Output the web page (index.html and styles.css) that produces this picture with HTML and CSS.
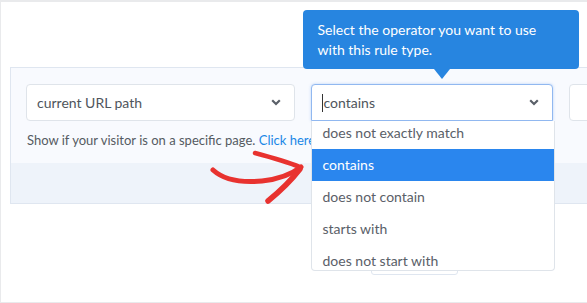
FILE: index.html
```html
<!DOCTYPE html>
<html>

<head>
  <title>Rule Operator</title>
  <link rel="stylesheet" href="styles.css">
</head>

<body>

  <div class="frame">
    <div class="rule-panel">
      <div class="rule-row">
        <div class="select">
          <span class="select-text">current URL path</span>
          <svg class="chevron" width="10" height="7" viewBox="0 0 10 7"><path d="M1.2 1.2 L5 5 L8.8 1.2" fill="none" stroke="#5a6068" stroke-width="2.2"/></svg>
        </div>

        <div class="select select-focus">
          <span class="caret"></span>
          <span class="select-text">contains</span>
          <svg class="chevron" width="10" height="7" viewBox="0 0 10 7"><path d="M1.2 1.2 L5 5 L8.8 1.2" fill="none" stroke="#5a6068" stroke-width="2.2"/></svg>

          <div class="tooltip">
            <p>Select the operator you want to use with this rule type.</p>
          </div>

          <div class="options">
            <ul class="option-list">
              <li>does not exactly match</li>
              <li class="active">contains</li>
              <li>does not contain</li>
              <li>starts with</li>
              <li>does not start with</li>
            </ul>
          </div>
        </div>

        <div class="select select-last"></div>
      </div>

      <p class="help-text">Show if your visitor is on a specific page. <a href="#">Click here</a></p>

      <div class="panel-footer"></div>
    </div>

    <div class="button-row">
      <button class="add-button"></button>
    </div>

    <!-- hand drawn arrow -->
    <svg class="red-arrow" width="110" height="60" viewBox="200 145 110 60">
      <path d="M213 170 C224 180 240 183 262 181 C280 179 292 174 301 167" fill="none" stroke="#e8322f" stroke-width="5" stroke-linecap="round"/>
      <path d="M255 153 C270 157 285 161 300 167" fill="none" stroke="#e8322f" stroke-width="4.5" stroke-linecap="round"/>
      <path d="M300 169 C290 182 279 192 268 201" fill="none" stroke="#e8322f" stroke-width="5.5" stroke-linecap="round"/>
    </svg>
  </div>

</body>

</html>
```

FILE: styles.css
```css
* {
  box-sizing: border-box;
  font-family: "Lato", "Open Sans", sans-serif;
}

body {
  margin: 0;
}

/* Outer frame */
.frame {
  position: relative;
  width: 587px;
  height: 303px;
  overflow: hidden;
  background-color: #ffffff;
  border-top: 2px solid #e9eaec;
  border-left: 1px solid #e9eaec;
  border-bottom: 1px solid #e9eaec;
}

/* Rule panel */
.rule-panel {
  width: 620px;
  margin-top: 65px;
  margin-left: 9px;
  background-color: #f8fafe;
  border: 1px solid #dfe6f0;
}

.rule-row {
  display: flex;
  gap: 16px;
  padding: 16px 0 0 15px;
}

.select {
  position: relative;
  display: flex;
  align-items: center;
  width: 270px;
  height: 37px;
  padding: 0 13px 0 10px;
  background-color: #ffffff;
  border: 1px solid #dfe4ea;
  border-radius: 4px;
}

.select-text {
  flex: 1;
  font-size: 14px;
  color: #4f555c;
}

.select-focus {
  width: 244px;
  padding-left: 10px;
  border-color: #91b8f0;
  border-radius: 4px 4px 0 0;
  box-shadow: 0 0 3px rgba(66, 140, 240, 0.35);
}

.select-last {
  width: 60px;
}

.caret {
  width: 1px;
  height: 18px;
  margin-right: 1px;
  background-color: #333333;
}

/* Help text */
.help-text {
  margin: 11px 0 0 16px;
  font-size: 13px;
  color: #555b62;
}

.help-text a {
  color: #1b87e6;
  text-decoration: none;
}

.panel-footer {
  height: 40px;
  margin-top: 15px;
  background-color: #eef3fa;
}

/* Tooltip */
.tooltip {
  position: absolute;
  left: -9px;
  top: -75px;
  width: 276px;
  height: 59px;
  padding: 10px 15px;
  background-color: #2785e0;
  border-radius: 4px;
}

.tooltip::after {
  content: "";
  position: absolute;
  left: 131px;
  bottom: -10px;
  border-left: 8px solid transparent;
  border-right: 8px solid transparent;
  border-top: 10px solid #2785e0;
}

.tooltip p {
  margin: 0;
  font-size: 14px;
  line-height: 20px;
  color: #ffffff;
}

/* Option list */
.options {
  position: absolute;
  left: -1px;
  top: 36px;
  width: 244px;
  height: 150px;
  overflow: hidden;
  background-color: #ffffff;
  border: 1px solid #dfe4ea;
  border-top: none;
  border-radius: 0 0 4px 4px;
}

.option-list {
  list-style: none;
  margin: -4px 0 0 0;
  padding: 0;
}

.option-list li {
  height: 32px;
  line-height: 32px;
  padding-left: 11px;
  font-size: 14px;
  color: #5a6068;
}

.option-list li.active {
  background-color: #2a86ee;
  color: #ffffff;
}

/* Button below */
.button-row {
  padding: 39px 0 0 370px;
}

.add-button {
  width: 87px;
  height: 32px;
  background-color: #ffffff;
  border: 1px solid #dfe6f0;
  border-radius: 3px;
}

.red-arrow {
  position: absolute;
  left: 199px;
  top: 143px;
}
```
